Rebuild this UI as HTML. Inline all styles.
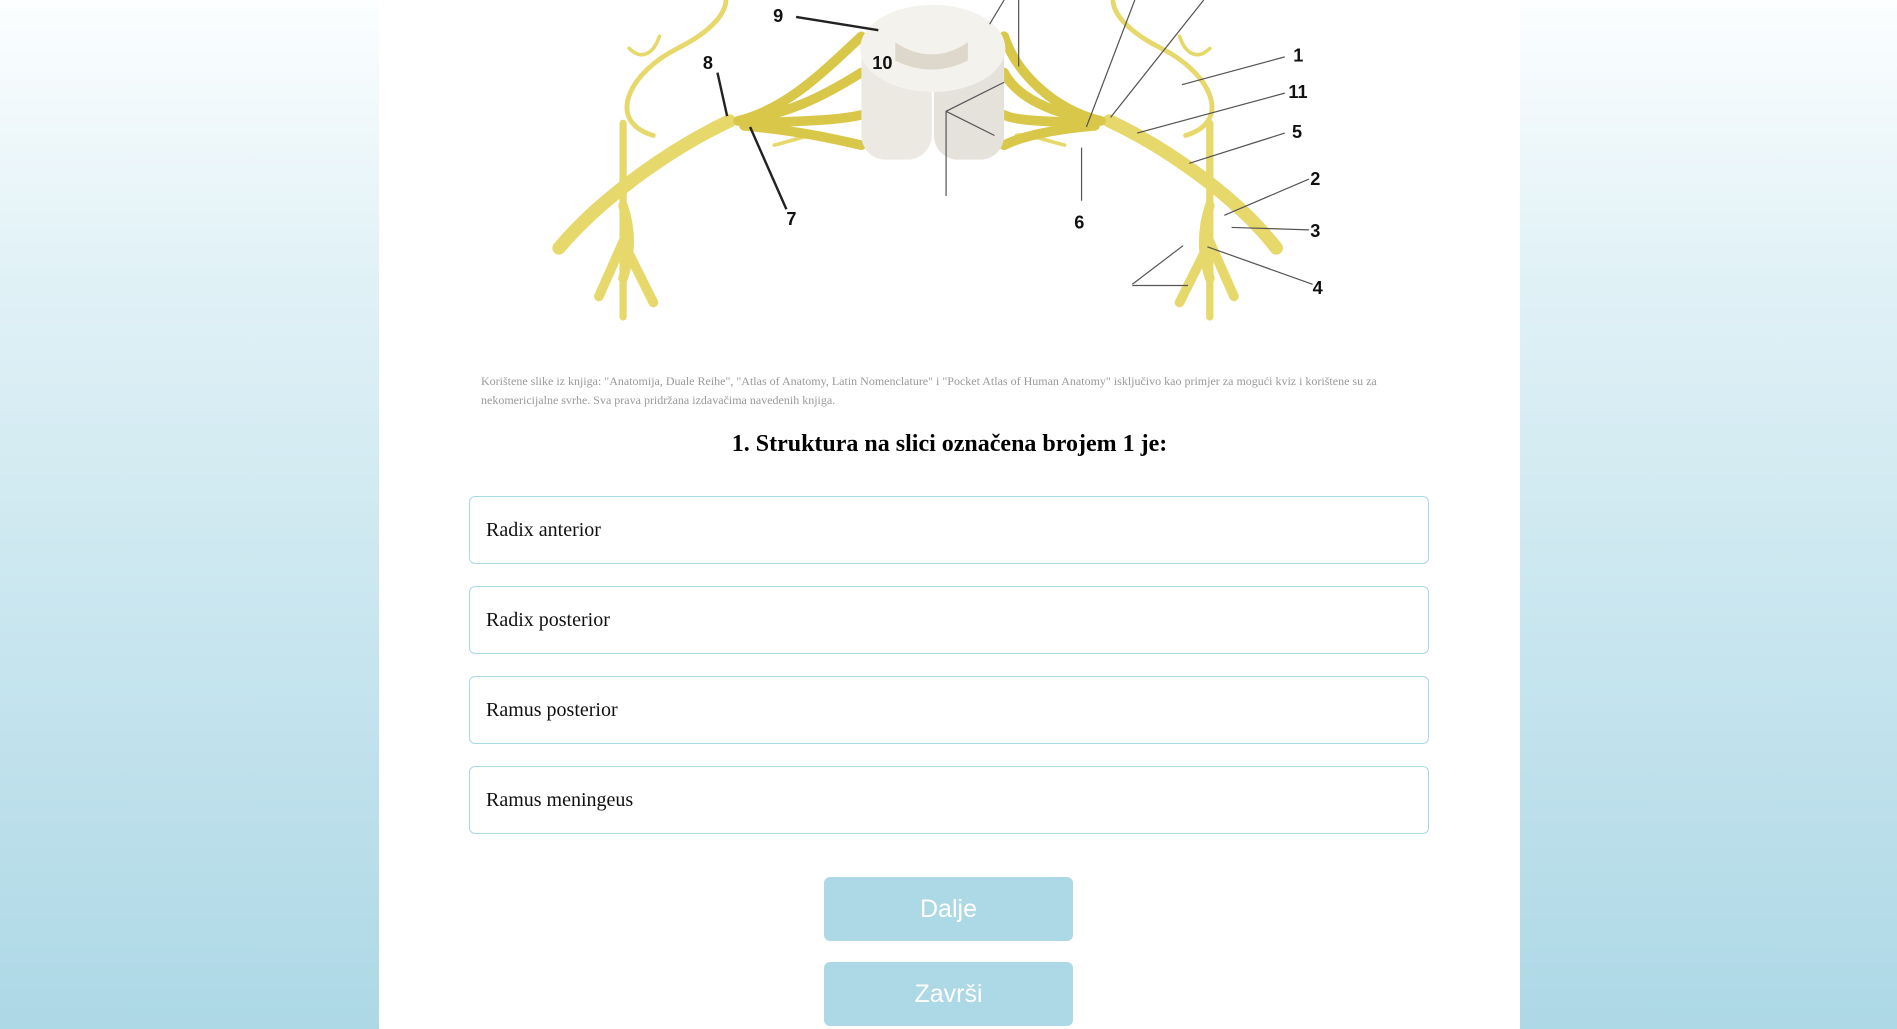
<!DOCTYPE html>
<html><head><meta charset="utf-8"><style>
html,body{margin:0;padding:0}
body{width:1897px;height:1029px;overflow:hidden;background:linear-gradient(#fcfeff 0%,#e2f2f7 25%,#add8e6 100%);font-family:"Liberation Serif",serif;position:relative}
.panel{position:absolute;left:379px;top:0;width:1141px;height:1029px;background:#fff}
svg{position:absolute;left:0;top:0}
.cap{position:absolute;left:481px;top:372px;width:920px;font-size:12px;line-height:19px;color:#999}
h2{position:absolute;left:379px;width:1141px;top:431px;margin:0;text-align:center;font-size:24px;font-weight:bold;color:#000}
.opt{position:absolute;left:469px;width:960px;height:68px;border:1px solid #a9d9e4;border-radius:6px;box-sizing:border-box;font-size:20px;line-height:66px;padding-left:16px;color:#111}
.btn{position:absolute;left:824px;width:249px;height:64px;background:#add8e6;border-radius:6px;color:#fff;font-family:"Liberation Sans",sans-serif;font-size:25px;text-align:center;line-height:64px}
</style></head><body>
<div class="panel"></div>
<svg width="1897" height="330" viewBox="0 0 1568 272.8">
<g fill="none" stroke="#e6d86a" stroke-linecap="round">
<path d="M603 100 C560 120 500 160 462 205" stroke-width="11"/>
<path d="M917 100 C960 120 1020 160 1055 205" stroke-width="11"/>
<path d="M515 102 V262" stroke-width="6"/><path d="M1000 102 V262" stroke-width="6"/>
<path d="M515 170 Q525 200 515 230 M515 200 L540 250 M515 200 L495 245" stroke-width="8"/>
<path d="M1000 170 Q990 200 1000 230 M1000 200 L975 250 M1000 200 L1020 245" stroke-width="8"/>
<path d="M540 112 C500 100 520 60 560 40 C590 25 600 10 600 0" stroke-width="4"/>
<path d="M980 112 C1020 100 1000 60 960 40 C930 25 920 10 920 0" stroke-width="4"/>
<path d="M520 40 C530 50 540 45 545 30 M1000 40 C990 50 980 45 975 30" stroke-width="3"/>
<path d="M640 120 C660 115 670 110 680 112 M880 120 C860 115 850 110 840 112" stroke-width="3"/>
<path d="M610 100 C650 90 680 60 712 30 M610 100 C650 95 680 80 712 60 M615 102 C660 100 690 100 712 95 M615 104 C660 108 690 115 712 120" stroke="#d9c74a" stroke-width="8"/>
<path d="M910 100 C870 90 840 60 830 30 M910 100 C870 95 840 80 830 60 M905 102 C860 100 840 100 830 95 M905 104 C860 108 840 115 830 120" stroke="#d9c74a" stroke-width="8"/>
</g>
<rect x="712" y="20" width="58" height="112" rx="20" fill="#ebe9e2"/>
<rect x="772" y="20" width="58" height="112" rx="20" fill="#e4e2da"/>
<ellipse cx="771" cy="40" rx="60" ry="36" fill="#f4f2ec"/>
<path d="M740 35 Q770 55 800 35 L800 50 Q770 65 740 50Z" fill="#ddd7cc"/>
<g stroke="#222" stroke-width="2" fill="none"><path d="M658 14 L726 25 M593 60 L601 96 M620 105 L650 173"/></g>
<g stroke="#555" stroke-width="1" fill="none"><path d="M977 70 L1062 47 M940 110 L1062 77 M983 135 L1062 110 M1012 178 L1082 148 M1018 188 L1082 190 M998 204 L1085 235 M936 235 L978 203 M936 236 L982 236 M782 162 V92 L830 68 M782 92 L822 112 M894 166 V122 M898 105 L938 0 M918 97 L995 0 M818 20 L830 0 M842 55 V0"/></g>
<g font-family="Liberation Sans,sans-serif" font-size="15" font-weight="bold" fill="#111">
<text x="639" y="18">9</text><text x="721" y="57">10</text><text x="581" y="57">8</text><text x="650" y="186">7</text>
<text x="1069" y="51">1</text><text x="1065" y="81">11</text><text x="1068" y="114">5</text><text x="1083" y="153">2</text><text x="1083" y="196">3</text><text x="1085" y="243">4</text><text x="888" y="189">6</text>
</g>
</svg>
<div class="cap">Korištene slike iz knjiga: "Anatomija, Duale Reihe", "Atlas of Anatomy, Latin Nomenclature" i "Pocket Atlas of Human Anatomy" isključivo kao primjer za mogući kviz i korištene su za nekomericijalne svrhe. Sva prava pridržana izdavačima navedenih knjiga.</div>
<h2>1. Struktura na slici označena brojem 1 je:</h2>
<div class="opt" style="top:496px">Radix anterior</div>
<div class="opt" style="top:586px">Radix posterior</div>
<div class="opt" style="top:676px">Ramus posterior</div>
<div class="opt" style="top:766px">Ramus meningeus</div>
<div class="btn" style="top:877px">Dalje</div>
<div class="btn" style="top:962px">Završi</div>
</body></html>
